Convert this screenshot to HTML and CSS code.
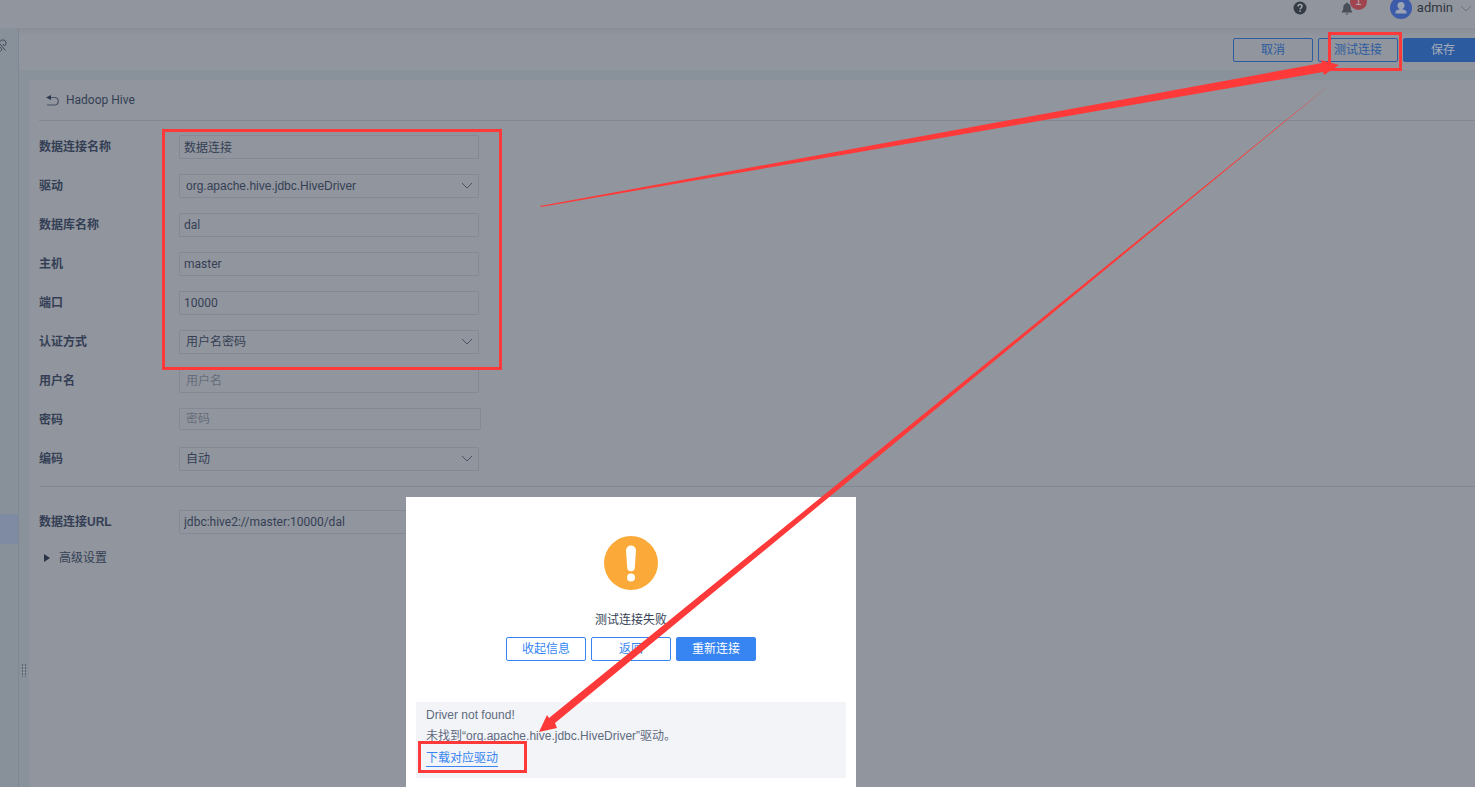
FILE: index.html
```
<!DOCTYPE html>
<html lang="zh-CN">

<head>
    <meta charset="UTF-8">
    <meta name="viewport" content="width=device-width, initial-scale=1.0">
    <title>数据连接 - Hadoop Hive</title>
    <link rel="stylesheet" href="styles.css">
</head>

<body>
    <div class="page">
        <header class="topbar">
            <svg class="help-icon" width="14" height="14" viewBox="0 0 14 14">
                <circle cx="7" cy="7" r="6.5" fill="#343b45" />
                <path d="M5 5.6C5 4.2 5.9 3.5 7 3.5s2 .7 2 1.8c0 1.5-1.9 1.5-1.9 3" fill="none" stroke="#a0a4ab" stroke-width="1.5" />
                <rect x="6.3" y="9.3" width="1.6" height="1.5" fill="#a0a4ab" />
            </svg>
            <div class="bell">
                <svg width="12" height="13" viewBox="0 0 12 13">
                    <path d="M6 .5c.6 0 .9.4.9.9C8.800 1.900 9.700 3.400 9.700 5.200c0 2.600.6 3.500 1.500 4.500v.8H.8v-.8c.9-1 1.500-1.900 1.500-4.500 0-1.800.9-3.300 2.800-3.800 0-.5.3-.9.9-.9zM4.500 11.400h3c-.2.8-.8 1.200-1.500 1.200s-1.300-.4-1.500-1.200z" fill="#484f59" />
                </svg>
                <span class="badge">1</span>
            </div>
            <svg class="avatar" width="22" height="22" viewBox="0 0 22 22">
                <circle cx="11" cy="11" r="11" fill="#3c5ba8" />
                <circle cx="11" cy="8.500" r="3.500" fill="#9ba3b5" />
                <path d="M5.500 16.500v-1.500c0-1.700 2-2.300 4-2.800v-1h3v1c2 .5 4 1.100 4 2.800v1.500z" fill="#9ba3b5" />
            </svg>
            <span class="user">admin</span>
            <svg class="user-arrow" width="12" height="7" viewBox="0 0 12 7">
                <path d="M1 1l5 5 5-5" fill="none" stroke="#6a717c" />
            </svg>
        </header>

        <div class="main">
            <aside class="sidebar">
                <svg class="side-icon" width="7" height="14" viewBox="0 0 7 14">
                    <path d="M0 2.500C1.500.5 4 .5 5.300 2s.8 3.500-.7 5L3 5M0 5l5.500 6.500M0 8.500c1.500 0 2.500 2 .5 4" fill="none" stroke="#3d4654" />
                </svg>
                <div class="side-active"></div>
            </aside>

            <div class="content">
                <div class="toolbar">
                    <button class="btn dim">取消</button>
                    <button class="btn dim">测试连接</button>
                    <button class="btn dim primary">保存</button>
                </div>

                <div class="body-row">
                    <div class="splitter">
                        <svg width="5" height="13" viewBox="0 0 5 13">
                            <path d="M.5 0v13M3.500 0v13" stroke="#565d6b" stroke-dasharray="2 1" />
                        </svg>
                    </div>
                    <div class="panel">
                        <div class="panel-title">
                            <svg width="13" height="11" viewBox="0 0 13 11">
                                <path d="M2 2.500h6.500c5 0 5 7.500 0 7.500H1" fill="none" stroke="#4a5466" stroke-width="1.200" />
                                <path d="M0 2.500L5 0v5z" fill="#303b52" />
                            </svg>
                            <span>Hadoop Hive</span>
                        </div>

                        <form class="form">
                            <label for="name">数据连接名称</label>
                            <input id="name" class="cjk" type="text" value="数据连接">
                            <label for="driver">驱动</label>
                            <div class="select">
                                <select id="driver">
                                    <option>org.apache.hive.jdbc.HiveDriver</option>
                                </select>
                                <svg width="12" height="7" viewBox="0 0 12 7"><path d="M1 1l5 5 5-5" /></svg>
                            </div>
                            <label for="db">数据库名称</label>
                            <input id="db" type="text" value="dal">
                            <label for="host">主机</label>
                            <input id="host" type="text" value="master">
                            <label for="port">端口</label>
                            <input id="port" type="text" value="10000">
                            <label for="auth">认证方式</label>
                            <div class="select">
                                <select id="auth">
                                    <option>用户名密码</option>
                                </select>
                                <svg width="12" height="7" viewBox="0 0 12 7"><path d="M1 1l5 5 5-5" /></svg>
                            </div>
                            <label for="user">用户名</label>
                            <input id="user" class="indent" type="text" placeholder="用户名">
                            <label for="password">密码</label>
                            <input id="password" class="indent password" type="password" placeholder="密码">
                            <label for="encoding">编码</label>
                            <div class="select">
                                <select id="encoding">
                                    <option>自动</option>
                                </select>
                                <svg width="12" height="7" viewBox="0 0 12 7"><path d="M1 1l5 5 5-5" /></svg>
                            </div>
                        </form>

                        <form class="form url-form">
                            <label for="url">数据连接URL</label>
                            <input id="url" type="text" value="jdbc:hive2://master:10000/dal">
                        </form>

                        <div class="advanced">
                            <svg width="6" height="8" viewBox="0 0 6 8"><path d="M0 0l6 4-6 4z" fill="#2b3448" /></svg>
                            <span>高级设置</span>
                        </div>
                    </div>
                </div>
            </div>
        </div>

        <!-- connection test result -->
        <div class="dialog" role="dialog">
            <svg class="warn" width="54" height="54" viewBox="0 0 54 54">
                <circle cx="27" cy="27" r="27" fill="#fbaa39" />
                <path d="M22 14.500a5 5 0 0 1 10 0l-1.200 17a3.800 3.800 0 0 1-7.600 0z" fill="#fff" />
                <circle cx="27" cy="41.500" r="4" fill="#fff" />
            </svg>
            <p class="message">测试连接失败</p>
            <div class="dialog-buttons">
                <button class="btn">收起信息</button>
                <button class="btn">返回</button>
                <button class="btn primary">重新连接</button>
            </div>
            <div class="detail">
                <p>Driver not found!</p>
                <p>未找到“org.apache.hive.jdbc.HiveDriver”驱动。</p>
                <a href="#">下载对应驱动</a>
            </div>
        </div>

        <!-- red marks and arrows -->
        <svg class="marks" width="1475" height="787" viewBox="0 0 1475 787">
            <g fill="none" stroke="#fd3a39" stroke-width="3">
                <rect x="163.500" y="130.500" width="337" height="238" />
                <rect x="1329.500" y="33.500" width="71" height="36" />
                <rect x="419.500" y="742.500" width="106" height="29" />
            </g>
            <g fill="#fd3a39">
                <path d="M540 206L1322 63L1321 60L1339 65L1324 75L1323 72L541 207z" />
                <path d="M1333 82L549 718L547 715L539 732L557 728L555 723z" />
            </g>
        </svg>
    </div>
</body>

</html>
```

FILE: styles.css
```
* {
    box-sizing: border-box;
}

body {
    margin: 0;
    font-family: "Liberation Sans", "Noto Sans CJK SC", sans-serif;
    font-size: 12px;
    line-height: 20px;
    color: #343f55;
    background-color: #91959d;
}

p {
    margin: 0;
}

.page {
    position: relative;
    display: flex;
    flex-direction: column;
    min-height: 100vh;
    overflow: hidden;
}

/* top bar */
.topbar {
    display: flex;
    align-items: center;
    justify-content: flex-end;
    height: 28px;
    padding: 0 4px 12px 0;
    background-color: #91959d;
}

.bell {
    position: relative;
    display: flex;
    margin: 0 37px 0 34px;
}

.badge {
    position: absolute;
    left: 9px;
    top: -9px;
    width: 17px;
    height: 17px;
    border-radius: 9px;
    background-color: #a04450;
    color: #b0a5ac;
    font-size: 12px;
    line-height: 17px;
    text-align: center;
}

.user {
    margin: 0 7px 0 5px;
    font-family: Roboto, sans-serif;
    font-size: 13px;
    color: #2f3540;
}

/* layout */
.main {
    flex: 1;
    display: flex;
}

.topbar .user-arrow {
    margin-right: -1px;
}

.sidebar {
    width: 19px;
    background-color: #88919a;
    border-right: 1px solid #7f8794;
}

.side-icon {
    display: block;
    margin-top: 11px;
}

.side-active {
    height: 30px;
    margin-top: 461px;
    background-color: #7e8ba3;
}

.content {
    flex: 1;
    min-width: 0;
    display: flex;
    flex-direction: column;
}

.toolbar {
    display: flex;
    justify-content: flex-end;
    gap: 5px;
    height: 42px;
    margin-right: -8px;
    padding-top: 10px;
    background: linear-gradient(#8a8e98, #91959d 8px);
}

.body-row {
    flex: 1;
    display: flex;
    padding-top: 10px;
    background-color: #89929b;
}

.splitter {
    width: 10px;
    padding: 584px 0 0 3px;
    line-height: 0;
}

.panel {
    flex: 1;
    padding-left: 10px;
    background-color: #91959d;
}

.panel-title {
    display: flex;
    align-items: center;
    gap: 7px;
    height: 41px;
    padding-left: 7px;
    border-bottom: 1px solid #828894;
    font-family: Roboto, sans-serif;
    font-size: 12px;
}

/* buttons */
.btn {
    width: 80px;
    height: 24px;
    padding: 0;
    border: 1px solid #3685f2;
    border-radius: 2px;
    background-color: transparent;
    color: #3685f2;
    font: inherit;
    cursor: pointer;
}

.btn.primary {
    background-color: #3685f2;
    color: #fff;
}

.btn.dim {
    border-color: #2c5ba0;
    color: #2c5ba0;
}

.btn.dim.primary {
    background-color: #2c5ba0;
    color: #a5adba;
}

/* form */
.form {
    display: grid;
    grid-template-columns: 140px 302px;
    grid-auto-rows: 24px;
    row-gap: 15px;
    padding-top: 14px;
}

.form label {
    font-weight: bold;
    line-height: 25px;
}

.form input,
.form select {
    width: 300px;
    height: 24px;
    padding: 0 4px;
    border: 1px solid #838a96;
    border-radius: 1px;
    background-color: transparent;
    color: #343f55;
    font: inherit;
}

.form input {
    font-family: Roboto, "Noto Sans CJK SC", sans-serif;
}

.form .cjk {
    padding-bottom: 2px;
}

.form .indent {
    padding-left: 6px;
}

.form .password {
    width: 302px;
    height: 22px;
}

.form input::placeholder {
    color: #656d7b;
}

.select {
    position: relative;
    width: 300px;
    height: 24px;
}

.form select {
    display: block;
    appearance: none;
    padding: 0 24px 0 6px;
}

.select svg {
    position: absolute;
    right: 6px;
    top: 8px;
    fill: none;
    stroke: #4a5362;
    pointer-events: none;
}

.url-form {
    margin-top: 15px;
    padding-top: 23px;
    border-top: 1px solid #828894;
}

.advanced {
    display: flex;
    align-items: center;
    gap: 9px;
    margin: 14px 0 0 5px;
}

/* dialog */
.dialog {
    position: absolute;
    left: 406px;
    top: 497px;
    width: 450px;
    padding: 39px 10px 10px;
    background-color: #fff;
    text-align: center;
}

.warn {
    display: block;
    margin: 0 auto 20px;
}

.dialog-buttons {
    display: flex;
    justify-content: center;
    gap: 5px;
    margin: 7px 0 41px;
}

.detail {
    padding: 3px 10px 9px;
    background-color: #f2f4f8;
    color: #616b7e;
    line-height: 21px;
    text-align: left;
}

.detail a {
    display: inline-block;
    margin-top: 4px;
    border-bottom: 1px solid #3685f2;
    color: #3685f2;
    line-height: 15px;
    text-decoration: none;
}

.marks {
    position: absolute;
    left: 0;
    top: 0;
    pointer-events: none;
}
```
